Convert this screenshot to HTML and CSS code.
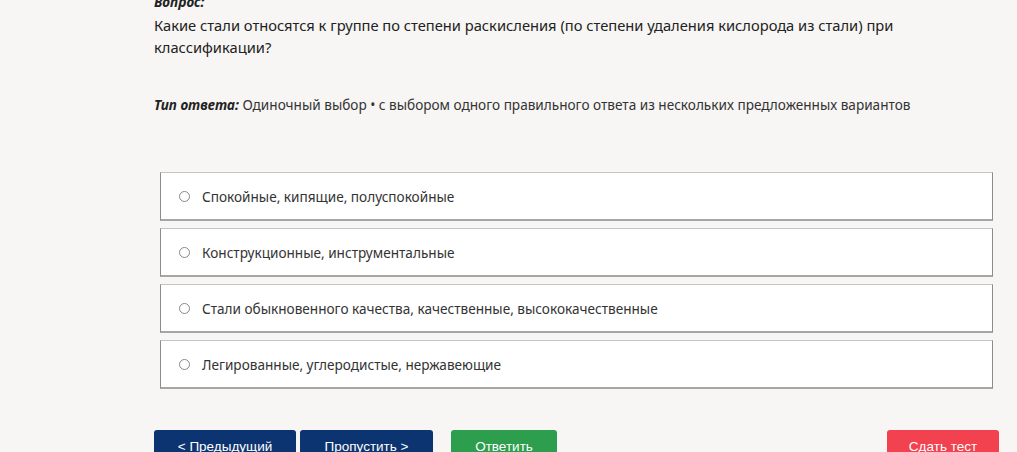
FILE: index.html
```html
<!DOCTYPE html>
<html lang="ru">
<head>
    <meta charset="UTF-8">
    <meta name="viewport" content="width=device-width, initial-scale=1.0">
    <title>Тест</title>
    <link rel="stylesheet" href="styles.css">
</head>
<body>

<div class="quiz">
    <div class="label">Вопрос:</div>
    <div class="question">Какие стали относятся к группе по степени раскисления (по степени удаления кислорода из стали) при классификации?</div>
    <div class="type"><b>Тип ответа:</b> Одиночный выбор • с выбором одного правильного ответа из нескольких предложенных вариантов</div>

    <div class="answers">
        <label class="answer"><span class="radio"></span>Спокойные, кипящие, полуспокойные</label>
        <label class="answer"><span class="radio"></span>Конструкционные, инструментальные</label>
        <label class="answer"><span class="radio"></span>Стали обыкновенного качества, качественные, высококачественные</label>
        <label class="answer"><span class="radio"></span>Легированные, углеродистые, нержавеющие</label>
    </div>

    <div class="controls">
        <button class="btn btn-nav">&lt; Предыдущий</button>
        <button class="btn btn-nav btn-skip">Пропустить &gt;</button>
        <button class="btn btn-answer">Ответить</button>
        <button class="btn btn-finish">Сдать тест</button>
    </div>
</div>

</body>
</html>
```

FILE: styles.css
```css
body {
    margin: 0;
    background-color: #f7f6f4;
    font-family: "Noto Sans", "Open Sans", sans-serif;
    color: #222;
    overflow: hidden;
}
.quiz {
    width: 845px;
    margin-left: 154px;
    margin-top: -8px;
}
.label {
    font-weight: bold;
    font-style: italic;
    font-size: 13.6px;
    line-height: 20px;
}
.question {
    font-size: 14.7px;
    line-height: 22px;
    margin-top: 2px;
    padding-right: 60px;
}
.type {
    font-size: 13.6px;
    line-height: 20px;
    margin-top: 37px;
    color: #333;
}
.type b {
    font-style: italic;
    color: #222;
}
.answers {
    margin: 57px 6px 0 6px;
    display: flex;
    flex-direction: column;
    gap: 7px;
}
.answer {
    display: flex;
    align-items: center;
    height: 46px;
    background: #fff;
    border: 1px solid #8c8c8c;
    border-top-color: #c4c4c4;
    border-bottom: 2px solid #a6a6a6;
    padding-left: 18px;
    font-size: 13.6px;
    color: #333;
    cursor: pointer;
}
.radio {
    width: 9px;
    height: 9px;
    border: 1px solid #888;
    border-radius: 50%;
    margin-right: 12px;
}
.controls {
    display: flex;
    margin-top: 41px;
}
.btn {
    font-family: "Liberation Sans", Arial, sans-serif;
    font-size: 13.5px;
    color: #fff;
    border: none;
    border-radius: 3px;
    height: 32px;
    padding: 0;
    cursor: pointer;
}
.btn-nav {
    background-color: #0b3470;
    width: 142px;
}
.btn-skip {
    width: 133px;
    margin-left: 4px;
}
.btn-answer {
    background-color: #2c9e4d;
    width: 106px;
    margin-left: 18px;
}
.btn-finish {
    background-color: #f2424f;
    width: 112px;
    margin-left: auto;
}
```
